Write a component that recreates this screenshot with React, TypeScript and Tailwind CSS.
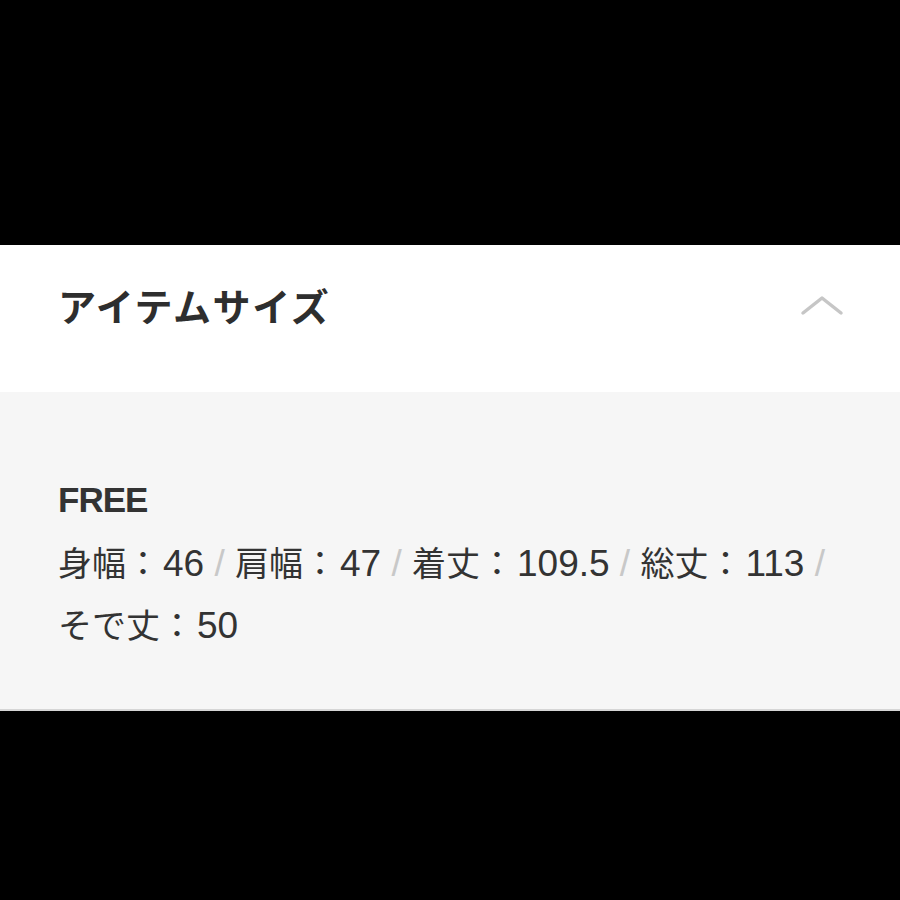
const sizes = [
  { label: "身幅", value: "46" },
  { label: "肩幅", value: "47" },
  { label: "着丈", value: "109.5" },
  { label: "総丈", value: "113" },
  { label: "そで丈", value: "50" },
];

const latin = "font-['Liberation_Sans',sans-serif] text-[37px] leading-none";

export default function App() {
  return (
    <div className="min-h-[900px] bg-black font-['Noto_Sans_CJK_JP','Noto_Sans',sans-serif]">
      <div className="h-[245px]" />

      {/* Header */}
      <div className="flex h-[147px] items-start justify-between bg-white px-[58px] pt-[44px]">
        <h2 className="font-['Liberation_Sans','Noto_Sans_CJK_JP',sans-serif] text-[38px] font-bold leading-[38px] tracking-[1.6px] text-[#2e2e2e]">
          アイテムサイズ
        </h2>
        <svg className="mr-[-2px] mt-[4px] h-[26px] w-[44px]" viewBox="0 0 44 26" fill="none" stroke="#c6c6c6" strokeWidth={3.5} strokeLinecap="round" strokeLinejoin="round">
          <path d="M3 20 L22 5 L41 20" />
        </svg>
      </div>

      {/* Body */}
      <div className="h-[319px] border-b-2 border-[#d6d6d6] bg-[#f6f6f6] px-[58px] pt-[77px] text-[34px] leading-[62px] text-[#333]">
        <div className="font-['Liberation_Sans',sans-serif] text-[35px] font-bold tracking-[-1px]">FREE</div>
        <p className="w-[784px]">
          {sizes.map((s, i) => (
            <span key={s.label}>
              <span className="whitespace-nowrap">
                {s.label}：<span className={`${latin} ml-[3px]`}>{s.value}</span>
              </span>
              {i < sizes.length - 1 && <span className={`${latin} text-[#c8c8c8]`}> / </span>}
            </span>
          ))}
        </p>
      </div>
    </div>
  );
}
